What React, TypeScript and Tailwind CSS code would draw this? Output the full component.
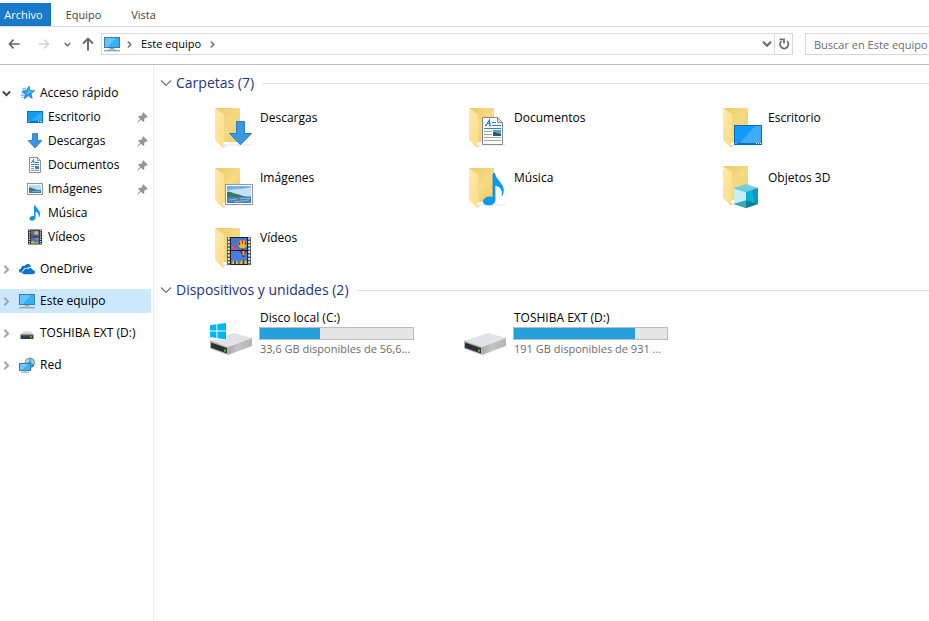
import React, { useState } from "react";

type IconProps = { className?: string };

/* ---------- arrows and chevrons ---------- */

function ChevronRight({ className = "" }: IconProps) {
  return (
    <svg viewBox="0 0 10 10" className={className} fill="none" stroke="currentColor" strokeWidth="2.2">
      <path d="M2.6 0.8 L6.8 5 L2.6 9.2" />
    </svg>
  );
}

function ChevronDown({ className = "" }: IconProps) {
  return (
    <svg viewBox="0 0 10 10" className={className} fill="none" stroke="currentColor" strokeWidth="2.2">
      <path d="M1 2.8 L5 6.8 L9 2.8" />
    </svg>
  );
}

function ArrowIcon({ className = "" }: IconProps) {
  return (
    <svg viewBox="0 0 14 14" className={className} fill="none" stroke="currentColor" strokeWidth="2">
      <path d="M13.5 7 H2 M6.5 2 L1.7 7 L6.5 12" />
    </svg>
  );
}

function RefreshIcon({ className = "" }: IconProps) {
  return (
    <svg viewBox="0 0 12 12" className={className} fill="none" stroke="currentColor" strokeWidth="1.8">
      <path d="M9 3.2 A4.2 4.2 0 1 1 3.4 3.2" />
      <path d="M1.5 1.3 H6 V5.5" />
    </svg>
  );
}

function PinIcon({ className = "" }: IconProps) {
  return (
    <svg viewBox="0 0 11 11" className={className} fill="#8c979e">
      <path d="M6.2 0.3 L10.8 4.8 L9.6 5.7 L8.8 5.4 L7.2 7.1 L7.3 9 L6.2 9.9 L4 7.8 L0.8 10.8 L0.2 10.3 L3.2 6.9 L1 4.9 L2 3.8 L4 3.9 L5.6 2.3 L5.3 1.3 Z" />
    </svg>
  );
}

/* ---------- small icons ---------- */

function MonitorIcon({ className = "" }: IconProps) {
  return (
    <svg viewBox="0 0 16 16" className={className}>
      <rect x="0.5" y="1.5" width="15" height="10" fill="#35b0f8" stroke="#3a7ca5" />
      <path d="M1 2 H12 L4 11 H1 Z" fill="#7fd0fd" opacity="0.65" />
      <rect x="6" y="12" width="4" height="1" fill="#8fa3ae" />
      <rect x="4" y="13" width="8" height="1" fill="#b9c7cf" />
      <rect x="0" y="14" width="16" height="1.4" fill="#93a7b4" />
    </svg>
  );
}

function StarIcon({ className = "" }: IconProps) {
  return (
    <svg viewBox="0 0 16 16" className={className}>
      <path d="M10 1.2 L11.1 5.6 L15.6 5.8 L12 8.6 L13.2 13.4 L9.2 10.8 L5.2 13.9 L6.2 9 L3 6 L7.2 5.6 Z" fill="#2b9cec" stroke="#1479c9" strokeWidth="0.7" />
      <path d="M9.8 3.4 L10.4 6.3 L13.2 6.5 L10 8 L7.2 10.5 Z" fill="#62bdf8" />
      <path d="M2.5 8 H5.5 M1.8 10.2 H5 M2.6 12.4 H4.4 M3.4 3.8 H7" stroke="#2a93e2" strokeWidth="0.9" />
    </svg>
  );
}

function DesktopIcon({ className = "" }: IconProps) {
  return (
    <svg viewBox="0 0 16 16" className={className}>
      <rect x="0.5" y="2.5" width="15" height="11" fill="#149cf5" stroke="#0a78bf" />
      <path d="M15 3 V11 L4 12 Z" fill="#46b2fb" opacity="0.7" />
      <path d="M1 12.5 H15" stroke="#0870b5" />
      <path d="M1.5 12.5 H2.5 M11 12.5 H12 M13.2 12.5 H14.5" stroke="#fff" />
    </svg>
  );
}

function DownloadIcon({ className = "" }: IconProps) {
  return (
    <svg viewBox="0 0 16 16" className={className}>
      <path d="M5.5 0.6 H10.5 V7.5 H15 L8 15 L1 7.5 H5.5 Z" fill="#3b92e0" stroke="#2878c4" strokeWidth="0.8" />
    </svg>
  );
}

function DocumentIcon({ className = "" }: IconProps) {
  return (
    <svg viewBox="0 0 16 16" className={className}>
      <path d="M2.5 0.5 H10.5 L13.5 3.5 V15.5 H2.5 Z" fill="#fbfcfc" stroke="#8b9298" />
      <path d="M10.5 0.5 V3.5 H13.5" fill="none" stroke="#8b9298" />
      <path d="M4.3 6 L6.6 2.3 L7 6 M5.3 4.8 H7" fill="none" stroke="#1f86cf" />
      <path d="M8 5.5 H12 M4 7.5 H12" stroke="#318fd2" />
      <path d="M4 9.5 H7 M4 11.5 H7 M4 13.5 H12" stroke="#8e999f" />
      <rect x="8" y="9" width="4" height="3" fill="#3c83b7" />
    </svg>
  );
}

function PictureIcon({ className = "" }: IconProps) {
  return (
    <svg viewBox="0 0 16 16" className={className}>
      <rect x="0.5" y="2.5" width="15" height="11" fill="#fff" stroke="#8f979e" />
      <rect x="2" y="4" width="12" height="8" fill="#b4dcf6" />
      <path d="M2 6.5 C5 6.5 7 8.5 12 9 H2 Z" fill="#416f6c" />
      <rect x="2" y="9" width="12" height="3" fill="#3d79a9" />
      <path d="M5 10.5 H13" stroke="#8bb8d5" strokeWidth="0.8" />
    </svg>
  );
}

function MusicIcon({ className = "" }: IconProps) {
  return (
    <svg viewBox="0 0 16 16" className={className} fill="#0c95ee">
      <path d="M7 0.5 H8.6 C9 3.5 13.2 5.2 13.1 9 C13 10.6 12.4 12 11.5 12.8 C12.3 9.8 11.2 7.6 8.6 6.8 V12.6 C8.6 14.4 7 15.8 5 15.8 C3.4 15.8 2.4 14.9 2.4 13.6 C2.4 11.7 4.8 10.5 7 11.1 Z" />
    </svg>
  );
}

function VideoIcon({ className = "" }: IconProps) {
  return (
    <svg viewBox="0 0 16 16" className={className}>
      <rect x="1" y="0.5" width="14" height="15" fill="#2d2d2d" />
      <path d="M2.5 1 V15 M13.5 1 V15" stroke="#e4e4e4" strokeWidth="1.3" strokeDasharray="1.2 1" />
      <rect x="4" y="1.5" width="8" height="6" fill="#3f74cf" />
      <rect x="4" y="8.5" width="8" height="6" fill="#3f74cf" />
      <ellipse cx="9.3" cy="4" rx="2.2" ry="2" fill="#e7b32d" />
      <path d="M4 5 H7 V7.5 H4 Z" fill="#a23f63" />
      <path d="M8 6 H10.5 L9.6 7.3 Z" fill="#733119" />
      <path d="M7.5 9 H12 L10 11 Z" fill="#df852b" />
      <path d="M4 13 L6 11.8 L8 13.5 L11.5 13 V14.5 H4 Z" fill="#e3b53d" />
    </svg>
  );
}

function CloudIcon({ className = "" }: IconProps) {
  return (
    <svg viewBox="0 0 16 16" className={className} fill="#0b74d1">
      <path d="M2.4 11.9 C0.6 11.8 -0.2 10.6 0.1 9.3 C0.3 8.3 1.1 7.6 2.1 7.5 C2.1 5.5 3.9 4.4 5.6 5 C6.4 3.2 8.4 2.5 10.1 3.3 C11.1 3.8 11.8 4.7 12 5.8 C10.7 5.6 9.7 6.1 9.1 7 C6.5 6.2 4.5 7.4 4.2 9.4 C3.1 9.6 2.4 10.6 2.4 11.9 Z" />
      <path d="M5.3 13.2 C3.7 13.2 3 12.2 3.1 11.3 C3.2 10.4 4 9.9 4.9 9.9 C4.9 7.7 7.4 6.7 9.3 8.1 C10.2 6.3 13.4 6.5 13.6 9 C15.2 9.1 16 10 16 11.1 C16 12.3 15.1 13.2 13.9 13.2 Z" />
    </svg>
  );
}

function SmallDriveIcon({ className = "" }: IconProps) {
  return (
    <svg viewBox="0 0 16 16" className={className}>
      <path d="M4 6.5 H12 L14.5 10 H1.5 Z" fill="#d5d5d7" />
      <rect x="1.5" y="9.5" width="13" height="4.5" fill="#3a3b3d" />
      <path d="M1.5 9.8 H14.5" stroke="#9e9fa1" strokeWidth="0.8" />
      <rect x="11" y="11" width="1.6" height="1.6" fill="#3fe04c" />
    </svg>
  );
}

function NetworkIcon({ className = "" }: IconProps) {
  return (
    <svg viewBox="0 0 16 16" className={className}>
      <circle cx="10.8" cy="5.8" r="5.2" fill="#5c9dbd" />
      <path d="M7 3 C9 1 11 2 10.5 4 C9 5 8 6 6.4 5.5 Z M12 2 C14 3 15.5 5 15 7 L12.5 5.5 Z" fill="#b6dbe7" />
      <path d="M12.8 8 L15 8.5 L12.8 10.4 Z" fill="#2d6d94" />
      <rect x="0.5" y="6.5" width="11" height="7" fill="#3eb3f7" stroke="#2f7fb1" />
      <path d="M1 7 H9 L3 13 H1 Z" fill="#85d3fc" opacity="0.7" />
      <path d="M4.5 14.2 H7.5 M2 15.3 H10" stroke="#8fa5b3" strokeWidth="0.9" />
    </svg>
  );
}

/* ---------- large icons, all on a 48px square ---------- */

function Folder({ children, raised = false }: { children: React.ReactNode; raised?: boolean }) {
  return (
    <svg viewBox="0 0 48 48" className="size-12 shrink-0" aria-hidden="true">
      <defs>
        <linearGradient id="folderBack" x1="0" y1="0" x2="1" y2="1">
          <stop offset="0" stopColor="#ecc964" />
          <stop offset="0.5" stopColor="#f5d985" />
          <stop offset="1" stopColor="#efcd68" />
        </linearGradient>
        <linearGradient id="folderFlap" x1="0" y1="0" x2="1" y2="1">
          <stop offset="0" stopColor="#ffe9ac" />
          <stop offset="1" stopColor="#fcdc86" />
        </linearGradient>
      </defs>
      <g transform={raised ? "translate(0 -2)" : undefined}>
        <path d="M17 40 H47 L44 42 H18 Z" fill="#f1f1f1" />
        <path d="M9 4 H34 V38 H16 Z" fill="url(#folderBack)" />
        <path d="M9 4 L18 10 V38 L17 39 V44 L9 36 Z" fill="url(#folderFlap)" />
        <path d="M17 44 L20 42 L17 41 Z" fill="#dedede" />
      </g>
      {children}
    </svg>
  );
}

function DownloadsFolder() {
  return (
    <Folder>
      <path d="M30.5 17.5 H38.5 V29.5 H45.5 L34.5 40.8 L23.5 29.5 H30.5 Z" fill="#3a97e6" stroke="#2a7dc8" />
    </Folder>
  );
}

function DocumentsFolder() {
  return (
    <Folder>
      <path d="M22.5 13.5 H37.5 L42.5 18.5 V40.5 H22.5 Z" fill="#fafbfb" stroke="#858a8e" />
      <path d="M37.5 13.5 V18.5 H42.5 Z" fill="#e2e5e7" stroke="#858a8e" />
      <path d="M25 21.5 H27 M26 21.5 L29.5 16 L30 21.5 M27.4 19.5 H30 M29 21.5 H31" fill="none" stroke="#207fc0" strokeWidth="1.1" />
      <path d="M32 18.5 H36 M32 21.5 H41 M24 24.5 H41" stroke="#2788cd" strokeWidth="1.1" />
      <path d="M24 27.5 H32 M24 30.5 H32 M24 33.5 H41 M24 36.5 H41" stroke="#9da5aa" />
      <rect x="33" y="26" width="8" height="6" fill="#5b9fd1" />
      <path d="M33 28 C36 28 38 30 41 30 V32 H33 Z" fill="#2e5860" />
    </Folder>
  );
}

function DesktopFolder() {
  return (
    <Folder>
      <rect x="20.5" y="21.5" width="27" height="19" fill="#119bff" stroke="#0a70b3" />
      <path d="M41 22 H47 V39 H26 Z" fill="#3eadff" />
      <path d="M21 39.5 H47" stroke="#0b70b4" />
      <path d="M21.5 39.5 H22.5 M42 39.5 H43 M44 39.5 H45 M46 39.5 H47" stroke="#fff" />
    </Folder>
  );
}

function PicturesFolder() {
  return (
    <Folder>
      <rect x="19.5" y="20.5" width="27" height="20" fill="#fff" stroke="#9297a0" />
      <rect x="21" y="22" width="24" height="17" fill="#70b0ee" />
      <path d="M21 27 C28 24 36 26 45 23 V32 H21 Z" fill="#c5e1f5" />
      <path d="M21 28 C25 27 27 30 31 30 C36 31 38 33 44 34 H21 Z" fill="#3d7961" />
      <rect x="21" y="33" width="24" height="6" fill="#4582b5" />
      <path d="M23 36 L31 35 M28 38 L43 36 M34 34.5 H44" stroke="#9dc6df" strokeWidth="0.8" />
    </Folder>
  );
}

function MusicFolder() {
  return (
    <Folder>
      <path d="M33 9 H35 C36 16 43.5 19 43.8 26 C44 29 42.6 31.6 41.2 33 C43.4 27 40.5 22.8 35.4 21.8 V36 C35.4 39 32.5 41.3 28.6 41.3 C25.2 41.3 23 39.7 23 37.2 C23 33.8 28.5 31.3 33 33 Z" fill="#0899f4" />
      <path d="M33 10 V33" stroke="#0b78c5" strokeWidth="0.7" />
    </Folder>
  );
}

function ObjectsFolder() {
  return (
    <Folder raised>
      <path d="M20 24 L32 20 L44 24 L32 28 Z" fill="#6fd0dc" />
      <path d="M20 24 L32 28 V44 L20 40 Z" fill="#c6eff3" />
      <path d="M44 24 L32 28 V44 L44 40 Z" fill="#04b3d6" />
      <path d="M38 26 L44 24 V40 L40 38.7 Z" fill="#0898bd" />
      <path d="M20 40 L32 36.5 L44 40 L32 44 Z" fill="#087f94" />
      <path d="M20 40 L32 36.5 V44 Z" fill="#3ba9b4" />
      <path d="M20 24 L32 28 L44 24" fill="none" stroke="#38bccf" strokeWidth="0.6" />
    </Folder>
  );
}

function VideosFolder() {
  return (
    <Folder>
      <rect x="21" y="13" width="24" height="28" fill="#55585a" />
      <path d="M22.8 13.5 V41 M43.2 13.5 V41" stroke="#f2f2f2" strokeWidth="1.8" strokeDasharray="2 1.4" />
      <rect x="24" y="13" width="18" height="28" fill="#202225" />
      <rect x="25" y="14" width="16" height="12" fill="#4175d1" />
      <rect x="25" y="27" width="16" height="13" fill="#4680df" />
      <path d="M25 23 L27 21 L29 23.5 L32 23 V26 H25 Z" fill="#d04e79" />
      {/* upper balloon */}
      <path d="M32 20 C32 17.5 34 16 36.5 16 C39 16 41 17.5 41 20 C41 22 39 23.5 38 24.5 H35 C34 23.5 32 22 32 20 Z" fill="#f0bd26" />
      <path d="M32.4 19 L34.2 17 V20.5 L33 21.5 Z M38.8 17 L40.6 19 L40 21.5 L38.8 20.5 Z" fill="#3b3f66" />
      <path d="M35.6 16 H37.4 L37 20 H36 Z" fill="#c93a2a" />
      <rect x="35.5" y="24.6" width="2" height="1.4" fill="#4b2a18" />
      {/* lower balloons */}
      <path d="M33.5 27 H41 L38.5 31 H36 Z" fill="#7b2a4c" />
      <path d="M36.4 27 H38.4 V31 H36.8 Z" fill="#f0bd26" />
      <rect x="36.5" y="31.6" width="2" height="1.4" fill="#4b2a18" />
      <path d="M26 40 C26 35 32 35 32 40 Z M34 40 C34 34 41 34 41 40 Z" fill="#f1b82b" />
      <path d="M28.2 36.4 H29.8 V40 H28.2 Z M36.6 35.6 H38.4 V40 H36.6 Z" fill="#353b6a" />
    </Folder>
  );
}

function DriveIcon({ system = false }: { system?: boolean }) {
  return (
    <svg viewBox="0 0 48 48" className="size-12 shrink-0" aria-hidden="true">
      <defs>
        <linearGradient id="driveSide" x1="0" y1="0" x2="1" y2="0">
          <stop offset="0" stopColor="#a9a9ab" />
          <stop offset="0.4" stopColor="#c2c3c6" />
          <stop offset="1" stopColor="#b5b5b8" />
        </linearGradient>
      </defs>
      <path d="M4 31 L28 23 L46 28 L22 37 Z" fill="#e1e2e5" />
      <path d="M22 37 L46 28 V36 L22 45 Z" fill="url(#driveSide)" />
      <path d="M4 30.6 L22 37 V45 L4 38.5 Z" fill="#b4b4b6" />
      <path d="M5 32.4 L21 38 V43.4 L5 37.8 Z" fill="#2f3032" />
      <rect x="18" y="39.6" width="2" height="2" fill="#2fe03f" />
      {system && (
        <>
          <path d="M3 12 H21 V30 H3 Z" fill="#fff" />
          <path d="M4 15.2 L10.4 14.3 V20.6 H4 Z M11.4 14.1 L20 13 V20.6 H11.4 Z M4 21.6 H10.4 V28 L4 27.1 Z M11.4 21.6 H20 V29.4 L11.4 28.2 Z" fill="#00b6f1" />
        </>
      )}
    </svg>
  );
}

/* ---------- data ---------- */

const TABS = ["Archivo", "Equipo", "Vista"];

const QUICK_ACCESS = [
  { label: "Escritorio", icon: DesktopIcon, pinned: true },
  { label: "Descargas", icon: DownloadIcon, pinned: true },
  { label: "Documentos", icon: DocumentIcon, pinned: true },
  { label: "Imágenes", icon: PictureIcon, pinned: true },
  { label: "Música", icon: MusicIcon, pinned: false },
  { label: "Vídeos", icon: VideoIcon, pinned: false },
];

const ROOTS = [
  { label: "OneDrive", icon: CloudIcon },
  { label: "Este equipo", icon: MonitorIcon },
  { label: "TOSHIBA EXT (D:)", icon: SmallDriveIcon },
  { label: "Red", icon: NetworkIcon },
];

const FOLDERS = [
  { label: "Descargas", icon: DownloadsFolder },
  { label: "Documentos", icon: DocumentsFolder },
  { label: "Escritorio", icon: DesktopFolder },
  { label: "Imágenes", icon: PicturesFolder },
  { label: "Música", icon: MusicFolder },
  { label: "Objetos 3D", icon: ObjectsFolder },
  { label: "Vídeos", icon: VideosFolder },
];

const DRIVES = [
  { label: "Disco local (C:)", free: "33,6 GB disponibles de 56,6...", used: 39, system: true },
  { label: "TOSHIBA EXT (D:)", free: "191 GB disponibles de 931 ...", used: 79, system: false },
];

/* ---------- page parts ---------- */

function AddressBar() {
  return (
    <div className="flex h-[38px] items-center border-b border-[#bdbdbd] pb-[5px] pt-[2px] text-[11px] text-[#6d6d6d]">
      <button aria-label="Atrás" className="ml-2 text-[#666]"><ArrowIcon className="size-3" /></button>
      <button aria-label="Adelante" className="ml-[18px] text-[#d6d6d6]"><ArrowIcon className="size-3 rotate-180" /></button>
      <button aria-label="Recientes" className="ml-3.5"><ChevronDown className="size-[7px]" /></button>
      <button aria-label="Subir" className="ml-2.5"><ArrowIcon className="size-3.5 rotate-90" /></button>

      <div className="ml-1.5 flex h-[22px] min-w-0 flex-1 items-center border border-[#d9d9d9]">
        <MonitorIcon className="ml-0.5 size-4" />
        <ChevronRight className="ml-1.5 size-[7px]" />
        <a href="#" className="ml-2 whitespace-nowrap text-black">Este equipo</a>
        <ChevronRight className="ml-2 size-[7px]" />
        <button aria-label="Ubicaciones anteriores" className="ml-auto mr-0.5"><ChevronDown className="size-2.5" /></button>
        <button aria-label="Actualizar" className="flex h-full w-[18px] items-center justify-center border-l border-[#d9d9d9]">
          <RefreshIcon className="size-3" />
        </button>
      </div>

      <input
        type="text"
        aria-label="Buscar en Este equipo"
        placeholder="Buscar en Este equipo"
        className="ml-3 h-[22px] w-[124px] shrink-0 border border-r-0 border-[#d9d9d9] pl-2 outline-none placeholder:text-[#6d6d6d]"
      />
    </div>
  );
}

function Sidebar() {
  const [open, setOpen] = useState(true);
  const [selected, setSelected] = useState("Este equipo");

  return (
    <nav className="w-[154px] shrink-0 border-r border-[#f0f0f0] pr-0.5 pt-4">
      <div className="flex h-6 items-center">
        <button aria-label="Acceso rápido" aria-expanded={open} onClick={() => setOpen(!open)} className="ml-0.5 w-[17px] text-[#444]">
          <ChevronDown className="size-[9px]" />
        </button>
        <a href="#" className="flex items-center gap-[5px] whitespace-nowrap">
          <StarIcon className="size-4" />
          Acceso rápido
        </a>
      </div>

      {open && (
        <ul>
          {QUICK_ACCESS.map(({ label, icon: Icon, pinned }) => (
            <li key={label}>
              <a href="#" className="flex h-6 items-center gap-[5px] pl-[27px] pr-[3px]">
                <Icon className="size-4" />
                {label}
                {pinned && <PinIcon className="ml-auto size-[11px]" />}
              </a>
            </li>
          ))}
        </ul>
      )}

      <ul className="mt-2 flex flex-col gap-2">
        {ROOTS.map(({ label, icon: Icon }) => (
          <li key={label} className={`flex h-6 items-center ${selected === label ? "bg-[#cce8ff]" : ""}`}>
            <button aria-label={`Expandir ${label}`} className="ml-0.5 w-[17px] text-[#a6a6a6]">
              <ChevronRight className="size-[9px]" />
            </button>
            <a href="#" onClick={() => setSelected(label)} className="flex items-center gap-[5px] whitespace-nowrap">
              <Icon className="size-4" />
              {label}
            </a>
          </li>
        ))}
      </ul>
    </nav>
  );
}

function Group({ title, children }: { title: string; children: React.ReactNode }) {
  const [open, setOpen] = useState(true);

  return (
    <section>
      <div className="flex h-5 items-center">
        <button onClick={() => setOpen(!open)} aria-expanded={open} className="flex items-center gap-1 whitespace-nowrap text-[14px] leading-5 text-[#1e3287]">
          <svg viewBox="0 0 12 12" className="size-3 text-[#777]" fill="none" stroke="currentColor" strokeWidth="1.2">
            <path d="M1 3.5 L6 8.5 L11 3.5" />
          </svg>
          {title}
        </button>
        <span className="ml-2 h-px flex-1 bg-[#e2e2e2]" />
      </div>
      {open && <div className="mt-px grid grid-cols-[254px_254px_1fr] pl-[46px]">{children}</div>}
    </section>
  );
}

export default function App() {
  return (
    <div className="flex min-h-screen flex-col overflow-hidden bg-white font-['Open_Sans','Noto_Sans',sans-serif] text-[12px] leading-4 text-black">
      <div role="tablist" className="flex h-[27px] border-b border-[#d9d9d9] pt-[3px] text-[11px] text-[#444]">
        {TABS.map((tab, i) => (
          <button key={tab} role="tab" aria-selected={i === 0} className={i === 0 ? "w-[51px] bg-[#1979ca] pr-1 text-white" : i === 1 ? "w-[65px]" : "w-[55px]"}>
            {tab}
          </button>
        ))}
      </div>

      <AddressBar />

      <div className="flex flex-1">
        <Sidebar />
        <main className="min-w-0 flex-1 pl-[6px] pt-2">
          <Group title="Carpetas (7)">
            {FOLDERS.map(({ label, icon: Icon }) => (
              <a key={label} href="#" className="flex h-[60px] gap-1.5 pt-2.5">
                <Icon />
                <span className="pt-1.5">{label}</span>
              </a>
            ))}
          </Group>

          <div className="mt-[6px]">
            <Group title="Dispositivos y unidades (2)">
              {DRIVES.map(drive => (
                <a key={drive.label} href="#" className="flex gap-[5px] pt-[9px]">
                  <DriveIcon system={drive.system} />
                  <div className="w-[155px]">
                    <div className="pl-px">{drive.label}</div>
                    <div role="progressbar" aria-label={drive.label} aria-valuenow={drive.used} className="mt-px h-[13px] border border-[#bcbcbc] bg-[#e6e6e6]">
                      <div className="h-full bg-[#26a0da]" style={{ width: `${drive.used}%` }} />
                    </div>
                    <div className="mt-px whitespace-nowrap pl-px text-[11px] text-[#6d6d6d]">{drive.free}</div>
                  </div>
                </a>
              ))}
            </Group>
          </div>
        </main>
      </div>
    </div>
  );
}
